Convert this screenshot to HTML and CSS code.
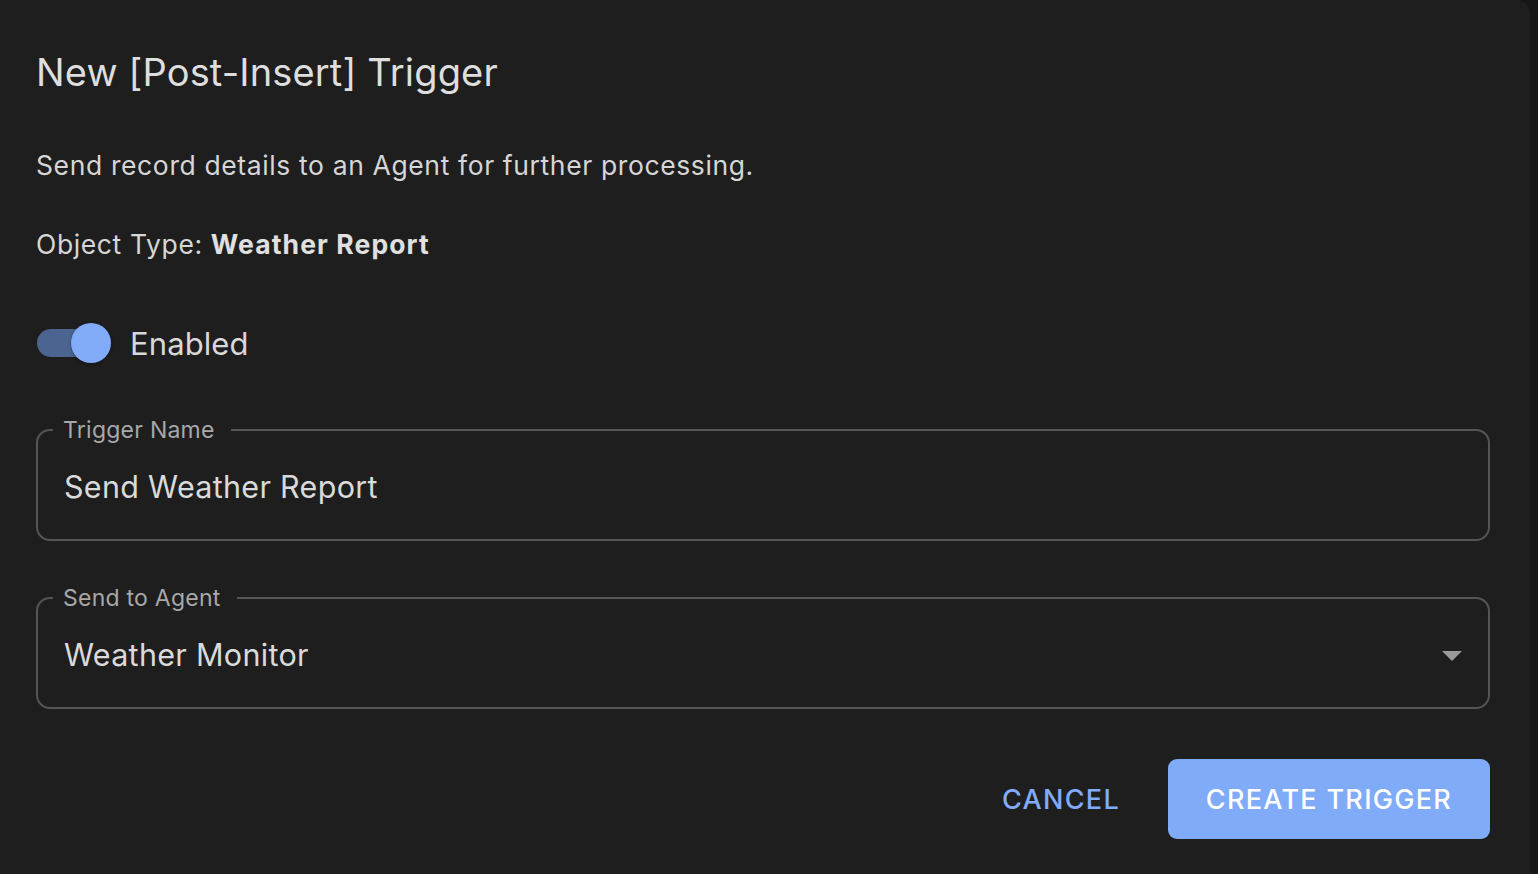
FILE: index.html
```html
<!DOCTYPE html>
<html>
<head>
<meta charset="utf-8">
<link rel="stylesheet" href="styles.css">
</head>
<body>
<div class="dialog">
  <h1 class="title">New [Post-Insert] Trigger</h1>
  <p class="desc">Send record details to an Agent for further processing.</p>
  <p class="otype">Object Type: <strong>Weather Report</strong></p>
  <div class="switch-row">
    <span class="switch"><span class="track"></span><span class="thumb"></span></span>
    <span class="switch-label">Enabled</span>
  </div>
  <fieldset class="field">
    <legend>Trigger Name</legend>
    <div class="value">Send Weather Report</div>
  </fieldset>
  <fieldset class="field select">
    <legend>Send to Agent</legend>
    <div class="value">Weather Monitor</div>
    <svg class="arrow" width="20" height="10" viewBox="0 0 20 10"><path d="M0 0 L20 0 L10 10 Z" fill="#9a9a9a"/></svg>
  </fieldset>
  <div class="actions">
    <button class="btn text">CANCEL</button>
    <button class="btn contained">CREATE TRIGGER</button>
  </div>
</div>
</body>
</html>
```
FILE: styles.css
```css
html, body {
  margin: 0;
  padding: 0;
  height: 100%;
  background: #171717;
  overflow: hidden;
}
body {
  font-family: Inter, "Noto Sans", sans-serif;
  color: #dcdcdc;
}
.dialog {
  width: 1530px;
  height: 900px;
  background: #1e1e1e;
  border-top-right-radius: 14px;
  box-sizing: border-box;
  padding: 48px 40px 0 36px;
  display: flex;
  flex-direction: column;
}
.title {
  margin: 0;
  font-size: 38px;
  font-weight: 400;
  line-height: 48px;
  color: #dedede;
  letter-spacing: 0.15px;
}
.desc {
  margin: 51px 0 0;
  font-size: 26.5px;
  line-height: 36px;
  color: #d6d6d6;
  letter-spacing: 0.62px;
}
.otype {
  margin: 43px 0 0;
  font-size: 26.5px;
  line-height: 36px;
  color: #d6d6d6;
  letter-spacing: 0.62px;
}
.otype strong {
  font-weight: 700;
  color: #e0e0e0;
  letter-spacing: 1.1px;
}
.switch-row {
  margin-top: 60px;
  display: flex;
  align-items: center;
  gap: 19px;
  height: 42px;
}
.switch {
  position: relative;
  width: 75px;
  height: 42px;
  display: inline-block;
}
.track {
  position: absolute;
  left: 1px;
  top: 7px;
  width: 72px;
  height: 28px;
  border-radius: 14px;
  background: #4c6590;
}
.thumb {
  position: absolute;
  left: 35px;
  top: 1px;
  width: 40px;
  height: 40px;
  border-radius: 50%;
  background: #82abfa;
  box-shadow: 0 1px 3px rgba(0,0,0,0.4);
}
.switch-label {
  font-size: 31px;
  color: #d8d8d8;
  letter-spacing: 0.1px;
}
.field {
  margin: 53px 0 0;
  padding: 0 26px 0 26px;
  border: 2px solid #555555;
  border-radius: 14px;
  height: 124px;
  box-sizing: border-box;
  position: relative;
  min-width: 0;
}
.field + .field {
  margin-top: 44px;
}
.field legend {
  padding: 0 16px 0 10px;
  margin-left: -11px;
  font-size: 23px;
  color: #a8a8a8;
  line-height: 26px;
  letter-spacing: 0.25px;
}
.value {
  font-size: 30.5px;
  color: #dadada;
  line-height: 40px;
  margin-top: 24px;
  letter-spacing: 0.3px;
}
.arrow {
  position: absolute;
  right: 26px;
  top: 40px;
}
.actions {
  display: flex;
  justify-content: flex-end;
  align-items: center;
  gap: 26px;
  margin-top: 50px;
}
.btn {
  font-family: Inter, "Noto Sans", sans-serif;
  font-size: 27px;
  font-weight: 500;
  letter-spacing: 1.3px;
  border: none;
  cursor: pointer;
}
.text {
  background: transparent;
  color: #82abfa;
  padding: 0 22px;
  height: 80px;
}
.contained {
  background: #80abf8;
  color: #ffffff;
  border-radius: 9px;
  height: 80px;
  width: 322px;
  padding: 0;
}
```
